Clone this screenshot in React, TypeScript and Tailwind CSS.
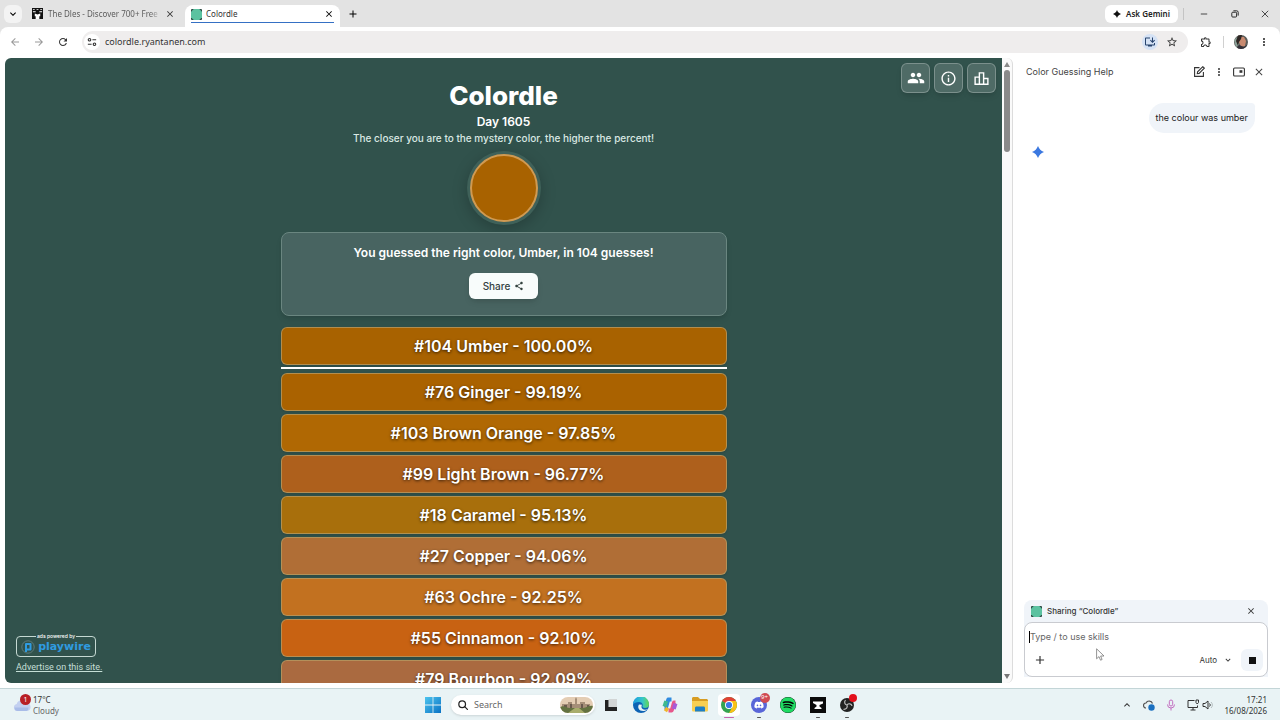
import type { ReactNode } from 'react'
import {
  MdAdd,
  MdArrowBack,
  MdArrowForward,
  MdClose,
  MdInfoOutline,
  MdInstallDesktop,
  MdKeyboardArrowDown,
  MdKeyboardArrowUp,
  MdMoreVert,
  MdOutlineExtension,
  MdOutlineLeaderboard,
  MdPeople,
  MdRefresh,
  MdShare,
  MdStarBorder,
} from 'react-icons/md'
import { FaDiscord, FaSpotify } from 'react-icons/fa'

type Guess = { n: number; name: string; percent: string; bg: string }

const WINNER: Guess = { n: 104, name: 'Umber', percent: '100.00', bg: 'bg-[#a86200]' }

const GUESSES: Guess[] = [
  { n: 76, name: 'Ginger', percent: '99.19', bg: 'bg-[#aa6200]' },
  { n: 103, name: 'Brown Orange', percent: '97.85', bg: 'bg-[#b06803]' },
  { n: 99, name: 'Light Brown', percent: '96.77', bg: 'bg-[#ae601c]' },
  { n: 18, name: 'Caramel', percent: '95.13', bg: 'bg-[#a86f0c]' },
  { n: 27, name: 'Copper', percent: '94.06', bg: 'bg-[#b06e36]' },
  { n: 63, name: 'Ochre', percent: '92.25', bg: 'bg-[#c27120]' },
  { n: 55, name: 'Cinnamon', percent: '92.10', bg: 'bg-[#c86212]' },
  { n: 79, name: 'Bourbon', percent: '92.09', bg: 'bg-[#aa6a40]' },
]

function ColordleIcon() {
  return (
    <svg viewBox="0 0 12 12" className="size-[11px] shrink-0">
      <rect width="12" height="12" rx="1" fill="#2d4a44" />
      <path d="M3 0h6l3 3v6l-3 3H3L0 9V3z" fill="#5bc2a0" />
    </svg>
  )
}

function Spark({ className, fill }: { className: string; fill: string }) {
  return (
    <svg viewBox="0 0 24 24" className={className} fill={fill}>
      <path d="M12 0c2.400 6.200 5.800 9.600 12 12-6.200 2.400-9.600 5.800-12 12-2.400-6.200-5.800-9.600-12-12C6.200 9.600 9.600 6.200 12 0z" />
    </svg>
  )
}

function TabStrip() {
  return (
    <header className="flex h-[27px] shrink-0 items-center bg-[#e3e3e3] pl-1 text-[8px]">
      <button aria-label="Search tabs" className="flex size-[18px] items-center justify-center rounded-md bg-[#f3f3f3]">
        <MdKeyboardArrowDown className="size-3" />
      </button>
      <div className="flex w-[163px] items-center pl-[10px] pr-[10px] text-[#555]">
        <svg viewBox="0 0 12 12" className="size-[11px] shrink-0">
          <rect width="12" height="12" fill="#111" />
          <path d="M1 1h2v1H1zM5 1h2v1H5zM9 1h2v1H9zM1 3.500h3v1H1zM8 3.500h3v1H8zM3 6l3 1 3-1v3H8v3H4V9H3z" fill="#fff" />
        </svg>
        <span className="ml-[5px] w-[113px] overflow-hidden bg-linear-to-r from-[#555] from-90% to-transparent bg-clip-text whitespace-nowrap text-transparent">
          The Dles - Discover 700+ Free D
        </span>
        <button aria-label="Close tab The Dles" className="ml-1 text-[#333]">
          <MdClose className="size-[10px]" />
        </button>
      </div>
      <div className="flex h-[22px] w-[155px] flex-col self-end rounded-t-lg bg-white px-[6px] pt-[3px]">
        <div className="flex h-3 items-center">
          <ColordleIcon />
          <span className="ml-1 flex-1 text-[#333]">Colordle</span>
          <button aria-label="Close tab Colordle">
            <MdClose className="size-[10px]" />
          </button>
        </div>
        <div className="mt-[2px] h-px bg-[#3570c4]" />
      </div>
      <button aria-label="New tab" className="ml-[7px]">
        <MdAdd className="size-3" />
      </button>
      <button className="ml-auto flex h-[18px] w-[73px] items-center justify-center gap-[5px] rounded-md bg-white font-semibold text-[#222]">
        <Spark className="size-2" fill="#111" />
        Ask Gemini
      </button>
      <div className="ml-[5px] h-3 w-px bg-[#c4c4c4]" />
      <div className="ml-1 flex">
        <button aria-label="Minimize" className="flex w-[31px] items-center justify-center">
          <svg viewBox="0 0 10 10" className="size-2" stroke="#222" fill="none">
            <path d="M1 5h8" />
          </svg>
        </button>
        <button aria-label="Restore" className="flex w-[31px] items-center justify-center">
          <svg viewBox="0 0 10 10" className="size-2" stroke="#222" strokeWidth="1.200" fill="none">
            <rect x="1" y="2.800" width="6" height="6" rx="1.200" />
            <path d="M3 1h4a2 2 0 0 1 2 2v4" />
          </svg>
        </button>
        <button aria-label="Close window" className="flex w-[30px] items-center justify-center">
          <svg viewBox="0 0 10 10" className="size-2" stroke="#222" fill="none">
            <path d="M1 1l8 8M9 1l-8 8" />
          </svg>
        </button>
      </div>
    </header>
  )
}

function Toolbar() {
  return (
    <div className="bg-[#e3e3e3]">
      <div className="flex h-[31px] shrink-0 items-center rounded-t-lg bg-white pb-[2px] pl-[9px] text-[#333]">
        <button aria-label="Back" className="text-[#999]">
          <MdArrowBack className="size-3" />
        </button>
        <button aria-label="Forward" className="ml-3 text-[#999]">
          <MdArrowForward className="size-3" />
        </button>
        <button aria-label="Reload" className="ml-3">
          <MdRefresh className="size-3" />
        </button>
        <div className="ml-[13px] flex h-[22px] flex-1 items-center rounded-full bg-[#efeded] px-[2px]">
          <button aria-label="Site information" className="flex size-4 items-center justify-center rounded-full bg-white">
            <svg viewBox="0 0 12 12" className="size-[10px]" fill="none" stroke="#333" strokeWidth="1.300">
              <circle cx="3" cy="3.300" r="1.500" />
              <path d="M6.500 3.300H11M1 8.700h4.500" />
              <circle cx="9" cy="8.700" r="1.500" />
            </svg>
          </button>
          <input
            aria-label="Address"
            defaultValue="colordle.ryantanen.com"
            className="ml-[5px] h-4 flex-1 bg-transparent text-[#333] outline-none"
          />
          <button aria-label="Install app" className="flex size-4 items-center justify-center rounded-full bg-[#d5e2f5] text-[#27436d]">
            <MdInstallDesktop className="size-3" />
          </button>
          <button aria-label="Bookmark" className="mx-2">
            <MdStarBorder className="size-3" />
          </button>
        </div>
        <button aria-label="Extensions" className="ml-3">
          <MdOutlineExtension className="size-3" />
        </button>
        <div className="ml-[11px] h-3 w-px bg-[#d0d0d0]" />
        <button aria-label="Profile" className="ml-[10px]">
          <svg viewBox="0 0 14 14" className="size-[14px] rounded-full">
            <rect width="14" height="14" fill="#5a5b58" />
            <path d="M0 5l4-4 2 3-1 6-3 2z" fill="#8ba39a" />
            <path d="M6 2h4l2 4-1 5-4 1-2-5z" fill="#c98a70" />
            <path d="M4 0h4l-1 4-2 3-1 4-2-5z" fill="#2f2624" />
            <path d="M2 14l3-4 5 2 3-2v4z" fill="#332f38" />
          </svg>
        </button>
        <button aria-label="Browser menu" className="mr-[10px] ml-[10px]">
          <MdMoreVert className="size-3" />
        </button>
      </div>
    </div>
  )
}

function HeaderButton({ label, children }: { label: string; children: ReactNode }) {
  return (
    <button
      aria-label={label}
      className="flex h-[30px] w-[29px] items-center justify-center rounded-md border border-white/25 bg-white/15 text-white shadow-md"
    >
      {children}
    </button>
  )
}

function GuessRow({ guess }: { guess: Guess }) {
  return (
    <li
      className={
        'flex h-[38px] items-center justify-center rounded-md border border-[#b59a62]/80 text-center text-[16px] font-semibold text-white shadow-sm text-shadow-[0_1px_3px_rgb(0_0_0/0.7)] ' +
        guess.bg
      }
    >
      #{guess.n} {guess.name} - {guess.percent}%
    </li>
  )
}

function Game() {
  return (
    <main className="relative flex min-w-0 flex-1 flex-col items-center overflow-hidden rounded-l-md bg-[#31524c] pt-5 font-[Inter,sans-serif] text-white">
      <div className="absolute top-[5px] right-[6px] flex gap-1">
        <HeaderButton label="Friends">
          <MdPeople className="size-[18px]" />
        </HeaderButton>
        <HeaderButton label="How to play">
          <MdInfoOutline className="size-[17px]" />
        </HeaderButton>
        <HeaderButton label="Statistics">
          <MdOutlineLeaderboard className="size-[17px]" />
        </HeaderButton>
      </div>

      <h1 className="text-[26px] leading-9 font-extrabold">Colordle</h1>
      <h2 className="text-[12px] leading-4 font-semibold">Day 1605</h2>
      <p className="text-[10px] leading-4 font-medium text-[#d9e8e3]">
        The closer you are to the mystery color, the higher the percent!
      </p>
      <div className="mt-2 size-[68px] shrink-0 rounded-full border-2 border-[#d09a52] bg-[#a86200] shadow-[0_0_0_3px_#3f6159,0_4px_16px_2px_rgb(0_0_0/0.25)]" />

      <section className="mt-[10px] flex h-[84px] w-[446px] shrink-0 flex-col items-center rounded-lg border border-[#6a8680] bg-[#486461] pt-3 shadow-md">
        <p className="text-[12px] leading-4 font-semibold">You guessed the right color, Umber, in 104 guesses!</p>
        <button className="mt-3 flex h-[26px] w-[69px] items-center justify-center gap-1 rounded-md bg-[#f8fcfb] text-[10px] font-medium text-[#33423f] shadow-md">
          Share
          <MdShare className="size-[10px]" />
        </button>
      </section>

      <ul className="mt-[11px] flex w-[446px] flex-col">
        <GuessRow guess={WINNER} />
      </ul>
      <hr className="mt-[2px] mb-1 w-[446px] border-t-2 border-white" />
      <ul className="flex w-[446px] flex-col gap-[3px]">
        {GUESSES.map((g) => (
          <GuessRow key={g.n} guess={g} />
        ))}
      </ul>

      <aside className="absolute bottom-[10px] left-[11px] flex flex-col items-start">
        <fieldset className="flex h-[25px] w-[80px] items-center justify-center gap-[3px] rounded-sm border border-[#c5d8d2] pb-1 text-[#2f9be0]">
          <legend className="mx-auto px-px text-[5px] leading-[8px] font-medium text-white">ads powered by</legend>
          <svg viewBox="0 0 14 14" className="size-[14px]" fill="none">
            <circle cx="7" cy="7" r="6.200" stroke="#5f7b7a" />
            <path d="M5 12V4h4.500v5.500H6" stroke="#2f9be0" strokeWidth="2" strokeLinejoin="round" />
          </svg>
          <span className="font-['DejaVu_Sans',sans-serif] text-[11px] leading-3 font-bold">playwire</span>
        </fieldset>
        <a href="#advertise" className="mt-1 font-[Roboto,sans-serif] text-[9px] leading-3 text-[#c5dfd6] underline">
          Advertise on this site.
        </a>
      </aside>
    </main>
  )
}

function Scrollbar() {
  return (
    <div className="flex w-[11px] shrink-0 flex-col items-center rounded-r-md border-r border-[#dcdcdc] bg-[#fafafa] py-1">
      <svg viewBox="0 0 6 5" className="h-[5px] w-[6px]">
        <path d="M3 0l3 5H0z" fill="#8a8a8a" />
      </svg>
      <div className="mt-[3px] h-[82px] w-[6px] rounded-full bg-[#8a8a8a]" />
      <svg viewBox="0 0 6 5" className="mt-auto h-[5px] w-[6px]">
        <path d="M3 5l3-5H0z" fill="#777" />
      </svg>
    </div>
  )
}

function GeminiPanel() {
  return (
    <aside className="flex w-[267px] shrink-0 flex-col bg-white pr-3 pb-[6px] pl-[11px] font-[Inter,sans-serif] text-[9px]">
      <div className="flex h-7 items-center pr-[3px] pl-[2px] text-[#444]">
        <h2 className="flex-1">Color Guessing Help</h2>
        <button aria-label="New chat">
          <svg viewBox="0 0 12 12" className="size-3" fill="none" stroke="#333" strokeWidth="1.100">
            <path d="M6.500 1.600H1.600v8.800h8.800V6" />
            <path d="M4.300 7.700l.3-1.900L9.800.7l1.500 1.500-5.200 5.200z" />
          </svg>
        </button>
        <button aria-label="Chat options" className="ml-2">
          <MdMoreVert className="size-3" />
        </button>
        <button aria-label="Pop out" className="ml-2">
          <svg viewBox="0 0 12 12" className="size-3" fill="none" stroke="#333" strokeWidth="1.100">
            <rect x=".6" y="2" width="10.800" height="8" rx="1" />
            <path d="M6.500 4.200h2.900v2.600H6.500z" fill="#333" stroke="none" />
          </svg>
        </button>
        <button aria-label="Close panel" className="ml-2">
          <MdClose className="size-3" />
        </button>
      </div>

      <p className="mt-[17px] mr-[13px] self-end rounded-2xl rounded-tr-sm bg-[#f0f4f9] px-[7px] py-2 leading-[14px] text-[#222]">
        the colour was umber
      </p>
      <Spark className="mt-[13px] ml-2 size-3" fill="#3b78e0" />

      <div className="mt-auto rounded-t-lg bg-[#f0f4f9]">
        <div className="flex h-[22px] items-center pr-3 pl-[7px] text-[8px] font-medium text-[#333]">
          <ColordleIcon />
          <span className="ml-[5px] flex-1">Sharing “Colordle”</span>
          <button aria-label="Stop sharing">
            <MdClose className="size-[10px]" />
          </button>
        </div>
        <form className="relative flex h-[55px] flex-col rounded-lg border border-[#c9cbd0] bg-white pt-2 pr-1 pl-1">
          <input
            aria-label="Message"
            placeholder="Type / to use skills"
            className="h-3 w-full border-l border-black outline-none placeholder:text-[#666]"
          />
          <div className="mt-[6px] flex items-center text-[#333]">
            <button type="button" aria-label="Add" className="ml-1">
              <MdAdd className="size-[14px]" />
            </button>
            <button type="button" className="ml-auto flex items-center gap-[6px] text-[8px]">
              Auto
              <MdKeyboardArrowDown className="size-[10px]" />
            </button>
            <button type="button" aria-label="Stop" className="ml-2 flex size-[22px] items-center justify-center rounded-md bg-[#f0f4f9]">
              <span className="size-[7px] bg-[#111]" />
            </button>
          </div>
          <svg viewBox="0 0 9 13" className="absolute top-[25px] left-[71px] h-[13px] w-[9px]">
            <path d="M.6.8v10l2.400-2.200 1.500 3.600 1.600-.7-1.500-3.500H8z" fill="#fff" stroke="#777" strokeWidth=".8" />
          </svg>
        </form>
      </div>
    </aside>
  )
}

function TaskButton({ label, mark, children }: { label: string; mark?: string; children: ReactNode }) {
  return (
    <button aria-label={label} className="relative flex h-[28px] w-7 items-center justify-center">
      {children}
      {mark && <span className={'absolute bottom-px h-px rounded-full ' + mark} />}
    </button>
  )
}

function Taskbar() {
  return (
    <footer className="flex h-8 shrink-0 items-center border-t border-[#c3d5d7] bg-[#e9f3f5] px-[13px] font-['Noto_Sans',sans-serif] text-[8px] leading-[11px] text-[#333]">
      <div className="flex flex-1 items-center">
        <div className="relative flex">
          <svg viewBox="0 0 18 14" className="h-[14px] w-[18px]">
            <path d="M4 13a3.500 3.500 0 0 1-.3-6.900A5 5 0 0 1 13 5a4 4 0 0 1 1 8z" fill="#c3d0f0" />
            <path d="M4 13a3.500 3.500 0 0 1-2.500-3.500h14A3.500 3.500 0 0 1 13.500 13z" fill="#a9bce8" />
          </svg>
          <span className="absolute -top-1 left-[7px] flex size-[11px] items-center justify-center rounded-full bg-[#b81f26] text-[7px] text-white">
            1
          </span>
        </div>
        <div className="ml-[2px]">
          <div>17°C</div>
          <div className="text-[#666]">Cloudy</div>
        </div>
      </div>

      <div className="flex items-center">
        <TaskButton label="Start">
          <svg viewBox="0 0 16 16" className="size-4">
            <defs>
              <linearGradient id="win" x1="0" y1="0" x2="1" y2="1">
                <stop offset="0" stopColor="#4dc4ee" />
                <stop offset="1" stopColor="#0a72c4" />
              </linearGradient>
            </defs>
            <path d="M0 0h7.600v7.600H0zM8.400 0H16v7.600H8.400zM0 8.400h7.600V16H0zM8.400 8.400H16V16H8.400z" fill="url(#win)" />
          </svg>
        </TaskButton>
        <label className="mr-[2px] ml-1 flex h-5 w-[144px] items-center rounded-full bg-white pr-[2px] pl-[7px] shadow-sm">
          <svg viewBox="0 0 12 12" className="size-[10px]" fill="none" stroke="#222" strokeWidth="1.500" strokeLinecap="round">
            <circle cx="5" cy="5" r="4" />
            <path d="M8 8l3.300 3.300" />
          </svg>
          <input
            aria-label="Search"
            placeholder="Search"
            className="ml-[6px] w-0 flex-1 text-[9px] outline-none placeholder:text-[#666]"
          />
          <svg viewBox="0 0 33 16" className="h-4 w-[33px]">
            <defs>
              <clipPath id="pill">
                <rect width="33" height="16" rx="8" />
              </clipPath>
            </defs>
            <g clipPath="url(#pill)">
              <rect width="33" height="16" fill="#e4cdb4" />
              <path d="M2 7h6V5h4v2h3V2l1-2 1 2v5h3V5h5v2h5v5H2z" fill="#a58e78" />
              <path d="M4 8h3v3H4zM10 7h2v4h-2zM21 7h2v4h-2zM27 8h2v3h-2z" fill="#69594e" />
              <path d="M0 10c4-2 6 1 10 1h13c4 0 6-3 10-2v7H0z" fill="#647241" />
              <path d="M8 16l7-5h4l6 5z" fill="#a9ad6c" />
            </g>
          </svg>
        </label>
        <div className="flex w-[264px] items-center justify-between">
          <TaskButton label="Task view">
            <svg viewBox="0 0 12 12" className="size-3">
              <path d="M3.500 0H12v8H3.500z" fill="#d2d5d5" />
              <path d="M0 1h3.500v7H12v4H0z" fill="#222" />
            </svg>
          </TaskButton>
          <TaskButton label="Edge">
            <svg viewBox="0 0 16 16" className="size-4">
              <defs>
                <linearGradient id="edge" x1="0" y1="0" x2="1" y2="0">
                  <stop offset="0" stopColor="#1b9de2" />
                  <stop offset=".6" stopColor="#36c5c8" />
                  <stop offset="1" stopColor="#63d84f" />
                </linearGradient>
              </defs>
              <circle cx="8" cy="8" r="8" fill="#0c62b4" />
              <path d="M0 7.500A8 8 0 0 1 16 7c0 3-2 4-4 4s-3-1-2.500-2C10.500 7 8.500 5 6 5 3 5 1 6 0 7.500z" fill="url(#edge)" />
              <path d="M6 7.500c-2 3 0 7 5 6.500 1.500 0 3-1 3.500-1.700-3 1-6.500.2-6-3.300L9 7.800z" fill="#e9f3f5" />
            </svg>
          </TaskButton>
          <TaskButton label="Copilot">
            <svg viewBox="0 0 16 16" className="size-4" fill="none" strokeWidth="4" strokeLinejoin="round">
              <path d="M9.500 2.500H6.300L4 10.500H2.500" stroke="#2f8be0" />
              <path d="M2.500 9.500L4.200 4" stroke="#3fb98f" />
              <path d="M6.500 13.500h3.200L12 5.500h1.500" stroke="#e7568b" />
              <path d="M13.500 6.500L11.800 12" stroke="#a75bd8" />
              <path d="M3 11.500l3 2" stroke="#f0b52c" />
            </svg>
          </TaskButton>
          <TaskButton label="File Explorer">
            <svg viewBox="0 0 16 15" className="h-[15px] w-4">
              <path d="M0 1.500C0 .7.600 0 1.500 0H6l2 2h6.500c.8 0 1.500.7 1.500 1.500V7H0z" fill="#d79c22" />
              <path d="M0 4h16v9c0 1-.6 1.500-1.500 1.500h-13C.6 14.500 0 14 0 13z" fill="#f8cf52" />
              <path d="M3 14.500V11c0-1 .6-1.500 1.500-1.500h7c1 0 1.500.6 1.500 1.500v3.500z" fill="#1d7fc6" />
            </svg>
          </TaskButton>
          <TaskButton label="Chrome" mark="w-[10px] bg-[#c964b0]">
            <span className="flex size-[22px] items-center justify-center rounded-sm bg-white">
              <svg viewBox="0 0 16 16" className="size-4">
                <circle cx="8" cy="8" r="8" fill="#34a350" />
                <path d="M8 8L1.100 4A8 8 0 0 1 14.900 4z" fill="#e24335" />
                <path d="M8 4h6.900A8 8 0 0 1 8 16l3.500-6z" fill="#fbc116" />
                <circle cx="8" cy="8" r="4" fill="#fff" />
                <circle cx="8" cy="8" r="3.100" fill="#3b78e7" />
              </svg>
            </span>
          </TaskButton>
          <TaskButton label="Discord" mark="w-1 bg-[#555]">
            <span className="flex size-4 items-center justify-center rounded-full bg-[#5865d8] text-white">
              <FaDiscord className="size-[10px]" />
            </span>
            <span className="absolute top-[2px] right-[3px] flex size-[10px] items-center justify-center rounded-full bg-[#d04a52] text-[6px] text-white">
              9+
            </span>
          </TaskButton>
          <TaskButton label="Spotify">
            <span className="rounded-full bg-black text-[#1fdb63]">
              <FaSpotify className="size-4" />
            </span>
          </TaskButton>
          <TaskButton label="Anvil" mark="w-1 bg-[#555]">
            <svg viewBox="0 0 16 16" className="size-4">
              <rect width="16" height="16" fill="#0b0b0b" />
              <path d="M3 4.500h10v2L9.500 8v1.500l2 1.500v1h-7v-1l2-1.500V8L3 6z" fill="#fff" />
            </svg>
          </TaskButton>
          <TaskButton label="OBS" mark="w-1 bg-[#555]">
            <svg viewBox="0 0 14 14" className="size-[14px]">
              <circle cx="7" cy="7" r="7" fill="#222" />
              <path
                d="M7 7C4.500 6.500 4 4 5.500 2M7 7c1.500-2 4.500-1.500 5 1M7 7c1 2.300-.8 4.500-3.500 4.300"
                fill="none"
                stroke="#bbb"
                strokeWidth="1.200"
              />
            </svg>
            <span className="absolute top-[3px] right-1 size-2 rounded-full bg-[#e3101c]" />
          </TaskButton>
        </div>
      </div>

      <div className="flex flex-1 items-center justify-end">
        <MdKeyboardArrowUp className="size-3" />
        <svg viewBox="0 0 12 12" className="ml-[10px] size-3">
          <path d="M3 9a2.500 2.500 0 0 1 0-5 3.500 3.500 0 0 1 6.500.5" fill="none" stroke="#555" strokeWidth="1.200" />
          <circle cx="8.500" cy="8.500" r="3.200" fill="#1b70c0" />
        </svg>
        <svg viewBox="0 0 12 12" className="ml-[10px] size-3" fill="none" stroke="#c26cc0">
          <rect x="4.300" y="1" width="3.400" height="6" rx="1.700" />
          <path d="M2.500 5.500a3.500 3.500 0 0 0 7 0M6 9v2.500" />
        </svg>
        <svg viewBox="0 0 12 12" className="ml-[10px] size-3" fill="none" stroke="#333">
          <path d="M7.500 1.500H1v7h9.500V6.500M3.500 11h5M6 8.500V11" />
          <path d="M9 1h2.500v2.500L10.200 5 9 3.500z" />
        </svg>
        <svg viewBox="0 0 12 12" className="ml-[3px] size-3" fill="none" stroke="#333">
          <path d="M1 4.500h2L6 2v8L3 7.500H1zM7.500 4.500a2 2 0 0 1 0 3" />
          <path d="M9 3a4 4 0 0 1 0 6" stroke="#b5bec0" />
        </svg>
        <div className="ml-[10px] text-right">
          <div>17:21</div>
          <div>16/08/2026</div>
        </div>
      </div>
    </footer>
  )
}

export default function App() {
  return (
    <div className="flex h-screen flex-col overflow-hidden bg-white font-['Noto_Sans',sans-serif] text-[9px]">
      <TabStrip />
      <Toolbar />
      <div className="flex min-h-0 flex-1 pb-[5px] pl-[5px]">
        <Game />
        <Scrollbar />
        <GeminiPanel />
      </div>
      <Taskbar />
    </div>
  )
}
